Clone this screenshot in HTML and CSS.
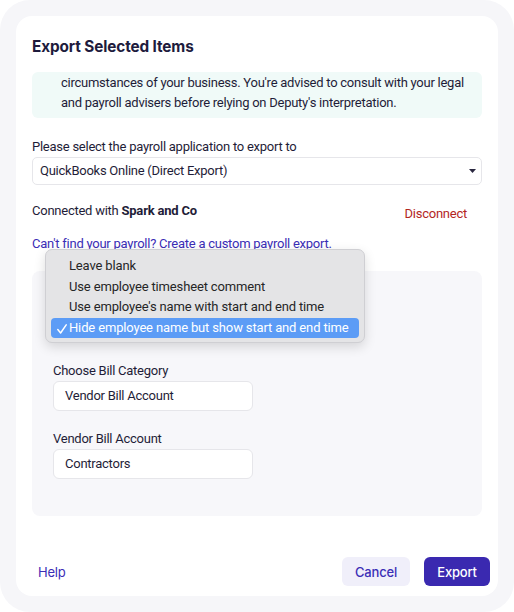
FILE: index.html
```html
<!DOCTYPE html>
<html lang="en">
<head>
<meta charset="utf-8">
<title>Export Selected Items</title>
<link rel="stylesheet" href="styles.css">
</head>
<body>
<div class="frame">
  <div class="card">
    <h1 class="title">Export Selected Items</h1>
    <div class="notice">circumstances of your business. You're advised to consult with your legal and payroll advisers before relying on Deputy's interpretation.</div>

    <label class="label label-first">Please select the payroll application to export to</label>
    <div class="select">
      <span>QuickBooks Online (Direct Export)</span>
      <svg class="caret" width="7" height="4" viewBox="0 0 7 4"><path d="M0 0h7L3.5 4z" fill="#2a2740"/></svg>
    </div>

    <div class="connected">
      <span>Connected with <b>Spark and Co</b></span>
      <a class="disconnect">Disconnect</a>
    </div>

    <a class="custom-link">Can't find your payroll? Create a custom payroll export.</a>

    <div class="panel-wrap">
      <div class="panel">
        <div class="field field-first">
          <div class="flabel">Choose Bill Category</div>
          <div class="input">Vendor Bill Account</div>
        </div>
        <div class="field">
          <div class="flabel">Vendor Bill Account</div>
          <div class="input">Contractors</div>
        </div>
      </div>
      <ul class="menu">
        <li>Leave blank</li>
        <li>Use employee timesheet comment</li>
        <li>Use employee's name with start and end time</li>
        <li class="selected"><svg class="check" width="10" height="10" viewBox="0 0 10 10"><path d="M0.8 5.6 L3.6 9 L9.2 0.8" fill="none" stroke="#ffffff" stroke-width="1.5" stroke-linecap="round" stroke-linejoin="round"/></svg>Hide employee name but show start and end time</li>
      </ul>
    </div>

    <div class="footer">
      <a class="help">Help</a>
      <div class="actions">
        <button class="btn btn-cancel">Cancel</button>
        <button class="btn btn-export">Export</button>
      </div>
    </div>
  </div>
</div>
</body>
</html>
```

FILE: styles.css
```css
* { box-sizing: border-box; }
html, body { margin: 0; padding: 0; background: #ffffff; }
body {
  font-family: Roboto, "Noto Sans", "Liberation Sans", sans-serif;
  color: #1f1d38;
  font-size: 13px;
  line-height: 20px;
  letter-spacing: -0.25px;
}
.frame {
  width: 514px;
  height: 612px;
  background: #f6f6f9;
  border-radius: 30px;
  padding: 16px;
}
.card {
  background: #ffffff;
  border-radius: 16px;
  height: 580px;
  padding: 21px 16px 0 16px;
  display: flex;
  flex-direction: column;
}
.title {
  margin: 0;
  font-family: Inter, Roboto, sans-serif;
  font-size: 15.3px;
  line-height: 20px;
  font-weight: 700;
  color: #1e1b3d;
  letter-spacing: -0.1px;
}
.notice {
  margin-top: 15px;
  background: #f0faf8;
  border-radius: 6px;
  padding: 1px 12px 5px 29px;
  height: 46px;
  overflow: hidden;
}
.label { display: block; }
.label-first { margin-top: 19px; }
.select {
  height: 28px;
  border: 1px solid #e6e6ea;
  border-radius: 5px;
  padding: 0 5px 0 7px;
  display: flex;
  align-items: center;
  justify-content: space-between;
}
.connected {
  margin-top: 16px;
  display: flex;
  justify-content: space-between;
  align-items: flex-start;
  height: 20px;
}
.connected b { font-weight: 700; letter-spacing: -0.2px; }
.disconnect {
  color: #b3261e;
  margin-top: 3px;
  margin-right: 15px;
}
.custom-link {
  display: block;
  margin-top: 13px;
  color: #3b2eb6;
}
.panel-wrap {
  position: relative;
  margin-top: 17px;
}
.panel {
  background: #f7f7fa;
  border-radius: 8px;
  height: 245px;
  padding: 90px 21px 0 21px;
}
.field { display: flex; flex-direction: column; }
.field + .field { margin-top: 18px; }
.flabel { height: 20px; }
.input {
  width: 200px;
  height: 30px;
  background: #ffffff;
  border: 1px solid #e6e6ea;
  border-radius: 6px;
  padding: 0 11px;
  display: flex;
  align-items: center;
}
.menu {
  position: absolute;
  left: 13px;
  top: -22px;
  width: 320px;
  margin: 0;
  padding: 6px 5px 4px 5px;
  list-style: none;
  background: #e4e4e6;
  border: 1px solid #cfcfd3;
  border-radius: 7px;
  box-shadow: 0 4px 12px rgba(0,0,0,0.14);
  color: #262626;
}
.menu li {
  height: 20.6px;
  line-height: 20.6px;
  padding-left: 18px;
  position: relative;
  border-radius: 4px;
  white-space: nowrap;
  letter-spacing: -0.15px;
}
.menu li.selected {
  background: #5c9cf6;
  color: #ffffff;
}
.check {
  position: absolute;
  left: 6px;
  top: 6px;
}
.footer {
  margin-top: auto;
  margin-bottom: 10px;
  display: flex;
  justify-content: space-between;
  align-items: center;
  margin-right: -8px;
}
.help {
  color: #3b2eb6;
  margin-left: 6px;
  font-family: Inter, Roboto, sans-serif;
}
.actions { display: flex; gap: 14px; }
.btn {
  font-family: Inter, Roboto, sans-serif;
  font-size: 13px;
  height: 29px;
  border: 0;
  border-radius: 6px;
  padding: 0;
  font-weight: 500;
  letter-spacing: -0.2px;
}
.btn-cancel {
  background: #f0effa;
  color: #3b2eb6;
  width: 68px;
}
.btn-export {
  background: #3a29b0;
  color: #ffffff;
  width: 66px;
}
```
